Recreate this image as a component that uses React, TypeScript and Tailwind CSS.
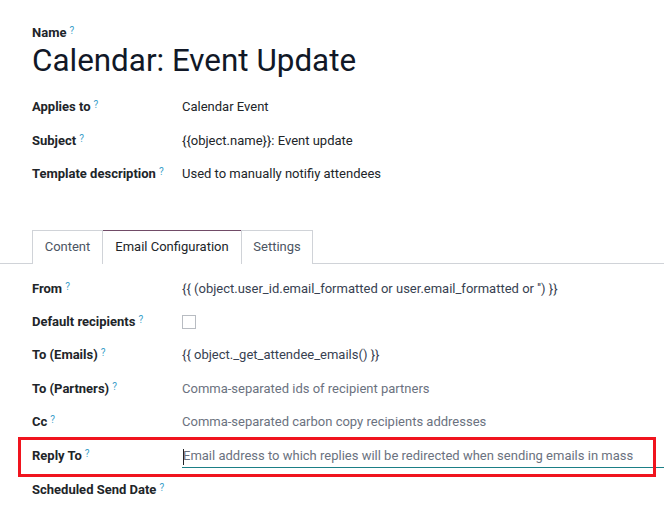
import React from "react";

const Q = () => <sup className="ml-[3px] text-[10px] font-normal text-[#3aa0c9] relative top-[-3px]">?</sup>;

function Row({ label, children, h = "h-[33.5px]" }: { label: string; children?: React.ReactNode; h?: string }) {
  return (
    <div className={`flex items-center ${h}`}>
      <div className="w-[150px] shrink-0 font-bold text-[#212529]">
        {label}
        <Q />
      </div>
      <div className="flex-1 min-w-0">{children}</div>
    </div>
  );
}

export default function App() {
  return (
    <div className="w-[664px] h-[521px] bg-white overflow-hidden text-[13px] text-[#212529]" style={{ fontFamily: "Roboto, 'Liberation Sans', sans-serif" }}>
      <div className="px-8 pt-[23px]">
        <div className="font-bold leading-[20px]">
          Name
          <Q />
        </div>
        <div className="text-[31.4px] leading-[36px] text-[#111827]">Calendar: Event Update</div>
        <div className="mt-[11px]">
          <Row label="Applies to">Calendar Event</Row>
          <Row label="Subject">{"{{object.name}}: Event update"}</Row>
          <Row label="Template description">Used to manually notifiy attendees</Row>
        </div>
      </div>
      <div className="mt-[39px] flex border-b border-[#d0d3d8] pl-8">
        <div className="w-[71px] h-[34px] flex items-center justify-center border border-b-0 border-[#d0d3d8] text-[#4b5563] -mb-px bg-white">Content</div>
        <div className="w-[138px] h-[34px] flex items-center justify-center border-t border-t-[#714b67] text-[#212529] -mb-px bg-white border-b border-b-white">Email Configuration</div>
        <div className="w-[72px] h-[34px] flex items-center justify-center border border-b-0 border-[#d0d3d8] text-[#4b5563] -mb-px bg-white">Settings</div>
      </div>
      <div className="pl-8 pt-[9px]">
        <Row label="From" h="h-[33px]">
          <span className="text-[#374151]">{"{{ (object.user_id.email_formatted or user.email_formatted or '') }}"}</span>
        </Row>
        <Row label="Default recipients" h="h-[33px]">
          <div className="w-[14px] h-[14px] border border-[#b8bcc2] bg-white" />
        </Row>
        <Row label="To (Emails)" h="h-[33px]">
          <span className="text-[#374151]">{"{{ object._get_attendee_emails() }}"}</span>
        </Row>
        <Row label="To (Partners)" h="h-[33.5px]">
          <span className="text-[#6b7280]">Comma-separated ids of recipient partners</span>
        </Row>
        <Row label="Cc" h="h-[33.5px]">
          <span className="text-[#6b7280]">Comma-separated carbon copy recipients addresses</span>
        </Row>
        <div className="relative">
          <div className="absolute left-[-14px] top-[-2px] w-[638px] h-[40px] border-[3px] border-[#f0141e] pointer-events-none z-10" />
          <div className="flex h-[35px] items-start pt-[7px]">
            <div className="w-[150px] shrink-0 font-bold">
              Reply To
              <Q />
            </div>
            <div className="flex-1 relative border-b border-[#1b7f86] h-[22px] flex items-center">
              <span className="w-px h-[16px] bg-[#212529] absolute left-[1px] top-[3px]" />
              <span className="text-[#6b7280] pl-[1px]">Email address to which replies will be redirected when sending emails in mass</span>
            </div>
          </div>
        </div>
        <Row label="Scheduled Send Date" h="h-[33px]" />
      </div>
    </div>
  );
}
